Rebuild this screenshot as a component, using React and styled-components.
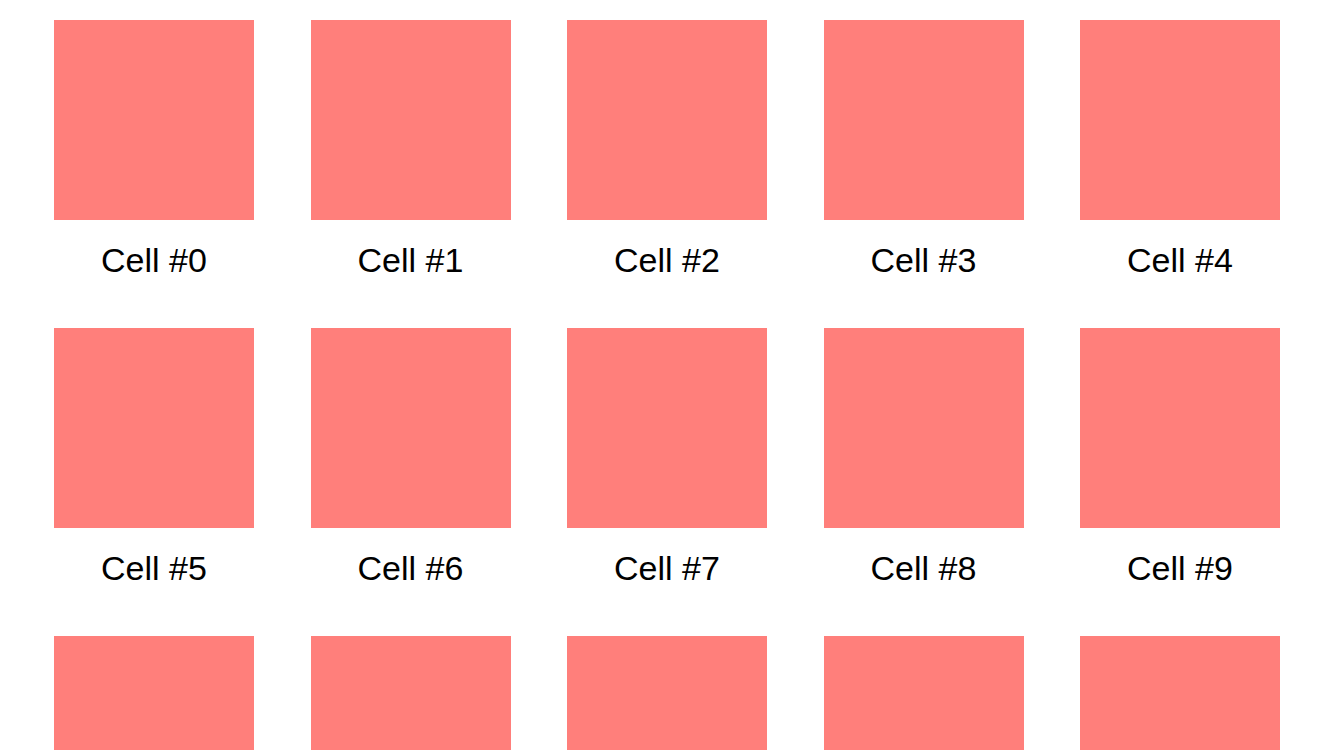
import React from "react";
import styled, { createGlobalStyle } from "styled-components";

const GlobalStyle = createGlobalStyle`
  html, body {
    margin: 0;
    padding: 0;
    background: #ffffff;
    overflow: hidden;
  }
`;

const Page = styled.div`
  width: 1334px;
  height: 750px;
  box-sizing: border-box;
  padding: 20px 54px 0;
  overflow: hidden;
`;

const Grid = styled.div`
  display: grid;
  grid-template-columns: repeat(5, 200px);
  justify-content: space-between;
  row-gap: 48px;
`;

const Cell = styled.div`
  display: flex;
  flex-direction: column;
  align-items: center;
`;

const Swatch = styled.div`
  width: 200px;
  height: 200px;
  background-color: #ff7f7b;
`;

const Label = styled.div`
  margin-top: 20px;
  height: 40px;
  line-height: 40px;
  font-family: "Liberation Sans", Arial, sans-serif;
  font-size: 34px;
  color: #000000;
  white-space: nowrap;
`;

// only the first two rows of labels are in view, the third row runs off the bottom
const cells = Array.from({ length: 15 }, (_, i) => i);

const App = () => (
  <>
    <GlobalStyle />
    <Page>
      <Grid>
        {cells.map((i) => (
          <Cell key={i}>
            <Swatch />
            {i < 10 && <Label>Cell #{i}</Label>}
          </Cell>
        ))}
      </Grid>
    </Page>
  </>
);

export default App;
